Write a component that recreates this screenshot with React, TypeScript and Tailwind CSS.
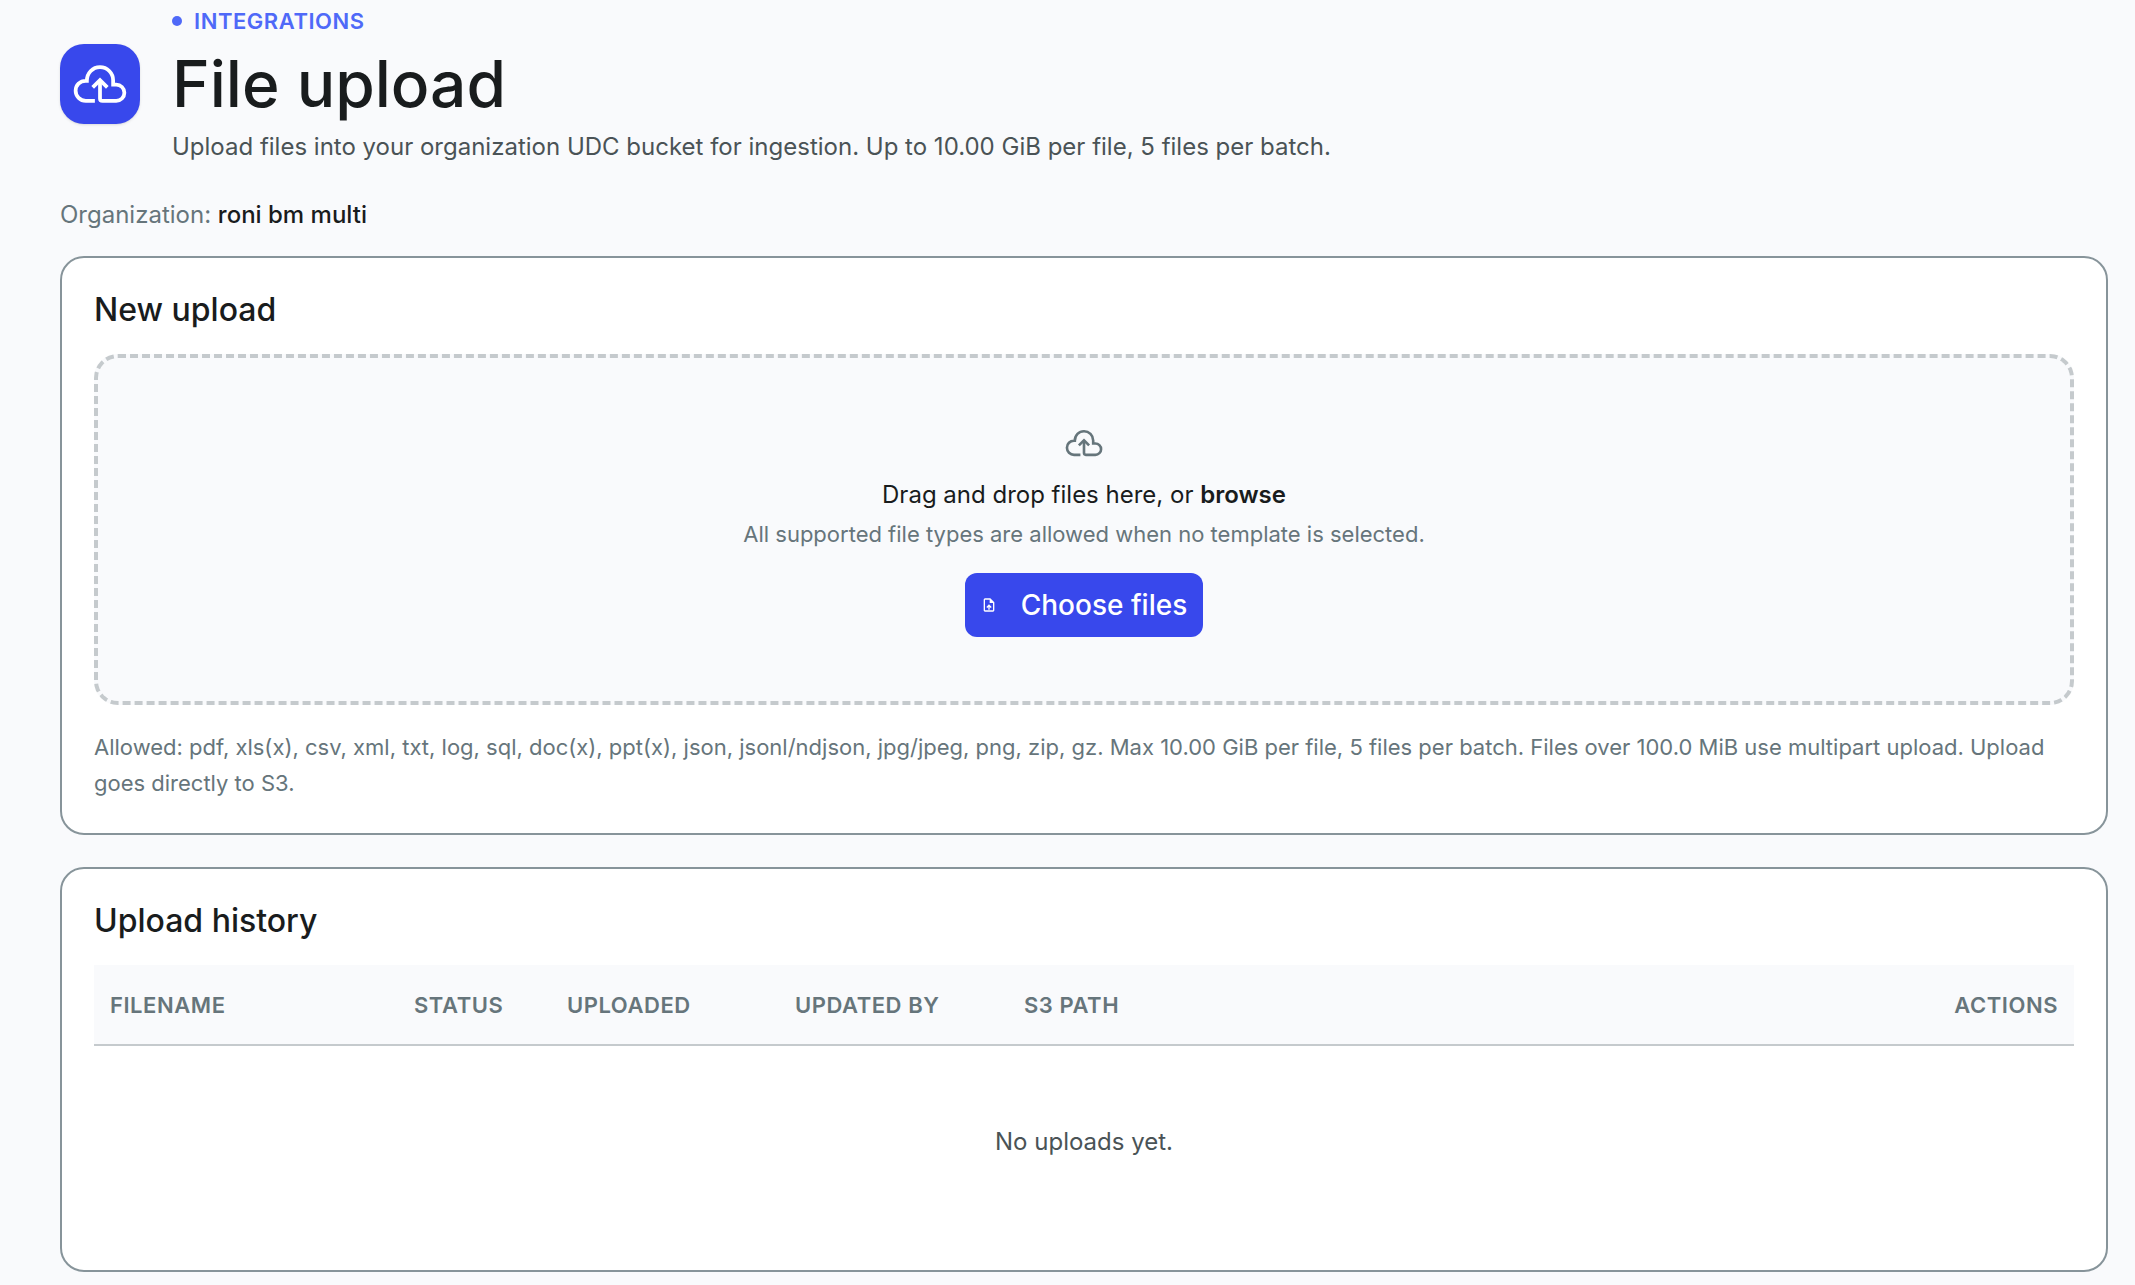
import type { ReactNode } from "react";

const columns = [
  { label: "Filename", className: "w-[304px]" },
  { label: "Status", className: "w-[153px]" },
  { label: "Uploaded", className: "w-[228px]" },
  { label: "Updated by", className: "w-[229px]" },
  { label: "S3 path", className: "" },
  { label: "Actions", className: "w-[160px] text-right" },
];

function CloudUploadIcon({ className }: { className: string }) {
  return (
    <svg
      viewBox="0 0 960 960"
      className={className}
      fill="none"
      stroke="currentColor"
      strokeWidth="60"
      aria-hidden="true"
    >
      <path d="M398 750H252A162 162 0 0 1 90 588C90 500 160 428 250 428H270C270 305 364 210 480 210S690 305 690 420V490H740A130 130 0 0 1 740 750H520Q480 750 480 710V420" />
      <path d="M363 535L480 418L597 535" />
    </svg>
  );
}

function UploadFileIcon({ className }: { className: string }) {
  return (
    <svg viewBox="0 -960 960 960" className={className} fill="currentColor" aria-hidden="true">
      <path d="M440-200h80v-167l64 64 56-57-160-160-160 160 57 56 63-63v167ZM240-80q-33 0-56.5-23.5T160-160v-640q0-33 23.5-56.5T240-880h320l240 240v480q0 33-23.5 56.5T720-80H240Zm280-520v-200H240v640h480v-440H520Z" />
    </svg>
  );
}

function Card({ title, children }: { title: string; children: ReactNode }) {
  return (
    <section className="rounded-3xl border-2 border-[#87949a] bg-white p-8">
      <h2 className="mb-6 text-[32px] leading-10 font-medium">{title}</h2>
      {children}
    </section>
  );
}

export default function App() {
  return (
    <main className="min-h-screen bg-[#f9fafc] pt-px pr-[27px] pb-3 pl-[60px] font-['Inter',sans-serif] text-2xl leading-10 text-[#191c1d]">
      <header className="flex items-center gap-8">
        <div className="flex size-20 shrink-0 items-center justify-center rounded-3xl bg-[#3848ec] text-white shadow-sm">
          <CloudUploadIcon className="size-[60px]" />
        </div>
        <div>
          <div className="flex items-center gap-3 text-[22px] leading-10 font-semibold tracking-wide text-[#4f69f8] uppercase">
            <span className="size-[10px] rounded-full bg-[#4f69f8]" />
            Integrations
          </div>
          <h1 className="text-[64px] leading-[86px] font-medium">File upload</h1>
          <p className="text-[#4a5356]">
            Upload files into your organization UDC bucket for ingestion. Up to 10.00 GiB per file, 5 files per batch.
          </p>
        </div>
      </header>

      <p className="mt-7 mb-[21px] text-[#66757b]">
        Organization: <span className="font-medium text-[#191c1d]">roni bm multi</span>
      </p>

      <div className="flex flex-col gap-8">
        <Card title="New upload">
          <div className="flex flex-col items-center rounded-3xl border-4 border-dashed border-[#c5cacd] bg-[#f9fafc] py-16">
            <CloudUploadIcon className="size-[42px] text-[#66757b]" />
            <p className="mt-3 leading-[38px]">
              Drag and drop files here, or <strong className="font-semibold">browse</strong>
            </p>
            <p className="text-[22px] text-[#66757b]">
              All supported file types are allowed when no template is selected.
            </p>
            <button
              type="button"
              className="mt-[19px] flex h-16 items-center gap-6 rounded-xl bg-[#3848ec] px-4 text-[28px] font-medium text-white"
            >
              <UploadFileIcon className="size-4" />
              Choose files
            </button>
          </div>
          <p className="mt-6 text-[22px] leading-9 text-[#66757b]">
            Allowed: pdf, xls(x), csv, xml, txt, log, sql, doc(x), ppt(x), json, jsonl/ndjson, jpg/jpeg, png, zip, gz. Max
            10.00 GiB per file, 5 files per batch. Files over 100.0 MiB use multipart upload. Upload goes directly to S3.
          </p>
        </Card>

        <Card title="Upload history">
          <table className="w-full table-fixed">
            <thead>
              <tr className="h-20 border-b-2 border-[#c5cacd] bg-[#f9fafc] text-left text-[22px] tracking-wide text-[#66757b] uppercase">
                {columns.map((column) => (
                  <th key={column.label} className={`px-4 font-semibold ${column.className}`}>
                    {column.label}
                  </th>
                ))}
              </tr>
            </thead>
            <tbody>
              <tr>
                <td colSpan={6} className="h-[193px] text-center text-[#4a5356]">
                  No uploads yet.
                </td>
              </tr>
            </tbody>
          </table>
        </Card>
      </div>
    </main>
  );
}
